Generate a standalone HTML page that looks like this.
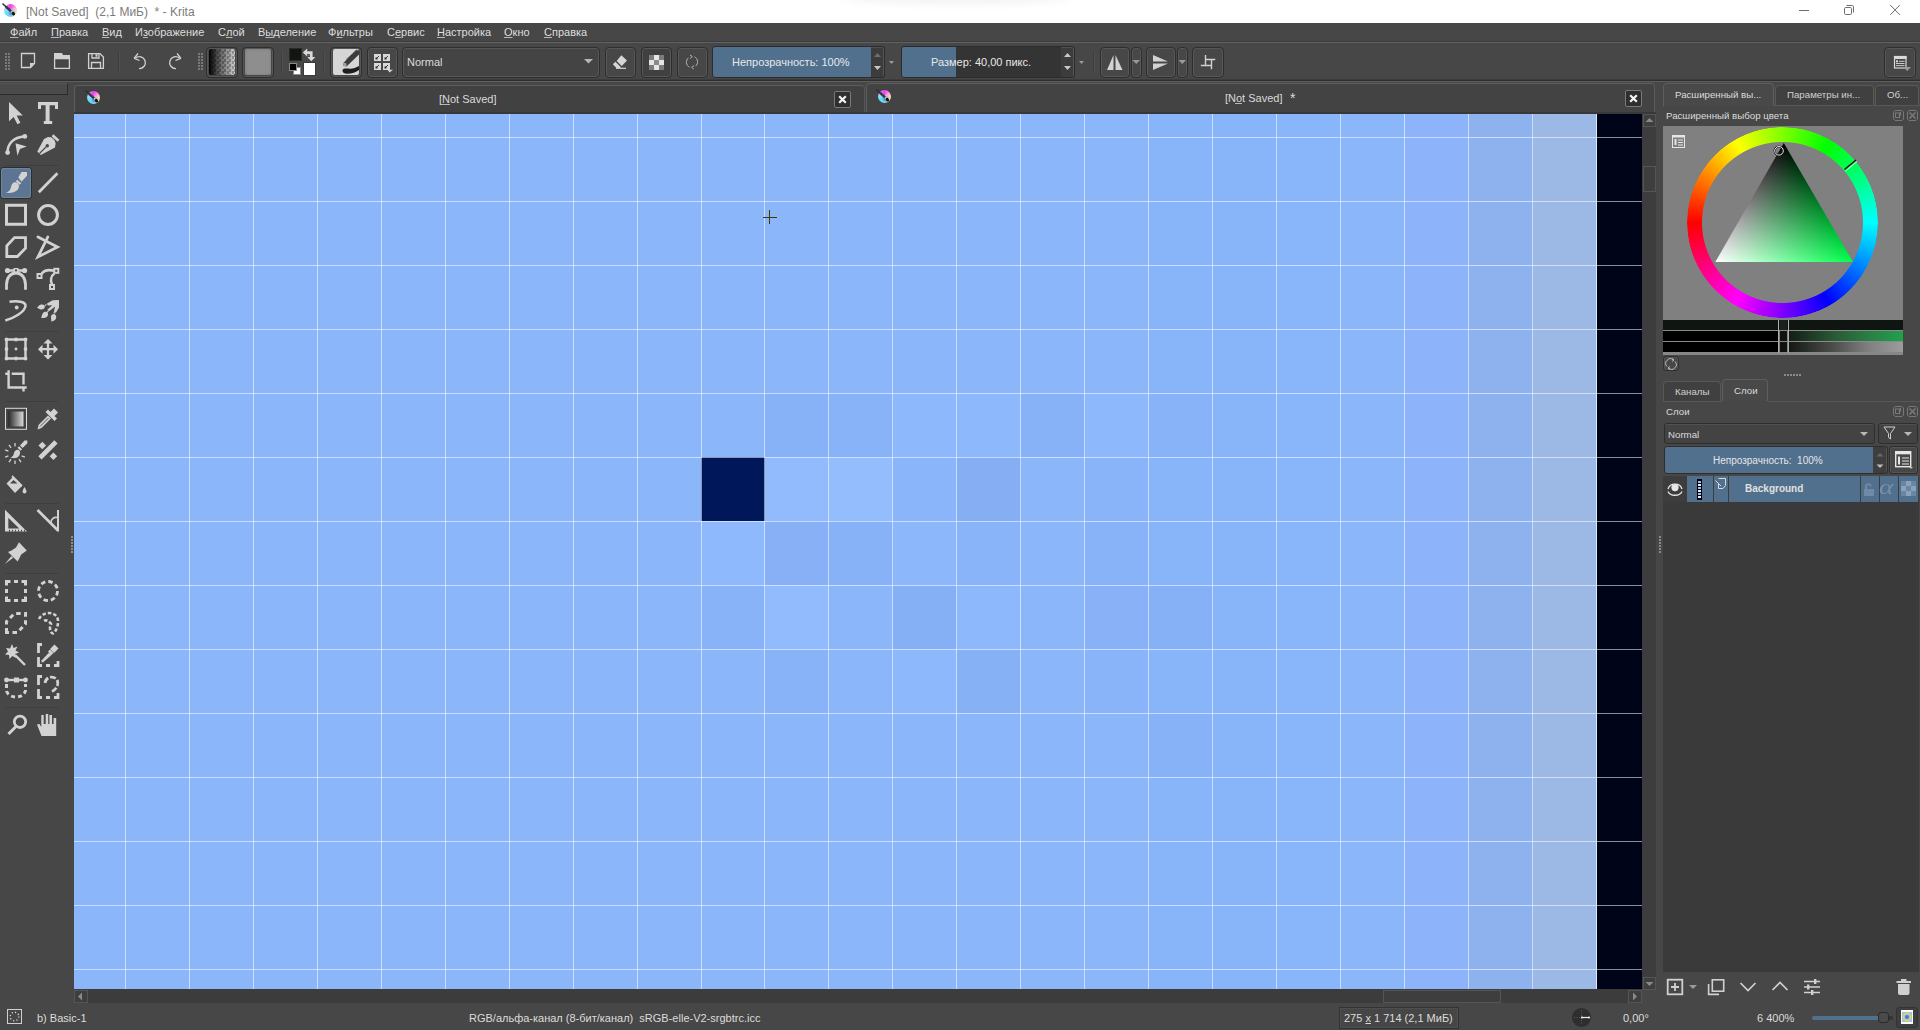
<!DOCTYPE html>
<html><head><meta charset="utf-8">
<style>
*{box-sizing:border-box;margin:0;padding:0}
html,body{width:1920px;height:1030px;overflow:hidden;background:#474747;font-family:"Liberation Sans",sans-serif;color:#dcdcdc;font-size:11px}
.a{position:absolute}
.t{position:absolute;white-space:pre}
.b{position:absolute;border:1px solid #2e2e2e;border-radius:4px;background:#474747;box-shadow:inset 0 0 0 1px #575757}
svg{position:absolute;overflow:visible}
.u{text-decoration:underline;text-underline-offset:1px;text-decoration-thickness:1px;text-decoration-color:#b8b8b8}
</style></head><body>

<div class="a" style="left:0px;top:0px;width:1920px;height:23px;background:#ffffff;"></div>
<div class="a" style="left:842px;top:-14px;width:232px;height:18px;border-radius:50%;background:rgba(0,0,0,0.05);filter:blur(4px)"></div>
<div class="a" style="left:4px;top:4px;width:13px;height:13px;border-radius:50%;background:radial-gradient(circle at 55% 70%,#4a8fe0 0,#5aa0ea 1.5px,rgba(140,200,240,0.9) 3px,rgba(140,200,240,0) 5px),conic-gradient(from 0deg,#f43cf6 0deg,#ff90e0 50deg,#ffc8d0 80deg,#fff066 120deg,#b8f0a0 160deg,#5ae8e8 200deg,#30f6f6 230deg,#a0d8ff 280deg,#d080f0 320deg,#f43cf6 360deg)"></div>
<svg style="left:4px;top:4px;" width="13" height="13" viewBox="0 0 13 13"><path d="M-1 0 L6.5 7" stroke="#2e2e2e" stroke-width="1.6" stroke-linecap="round"/><path d="M2.5 3.2 L6.8 7.2" stroke="#383838" stroke-width="2.4" stroke-linecap="round"/><path d="M7 7.3 L8.6 8.8" stroke="#bbb" stroke-width="2"/><ellipse cx="9.4" cy="9.6" rx="1.5" ry="1.9" transform="rotate(-40 9.4 9.6)" fill="#111"/></svg>
<div class="t" style="left:26px;top:6px;font-size:12px;line-height:12px;color:#7b7b7b;font-weight:400;">[Not Saved]  (2,1 МиБ)  * - Krita</div>
<div class="a" style="left:1799px;top:10px;width:10px;height:1px;background:#6e6e6e;"></div>
<svg style="left:0px;top:0px;" width="1920" height="1030" viewBox="0 0 1920 1030"><rect x="1844.5" y="7.5" width="7" height="7" rx="1.2" fill="none" stroke="#6e6e6e" stroke-width="1"/><path d="M1846.5 5.5 H1852 C1853 5.5 1853.5 6 1853.5 7 V12.5" fill="none" stroke="#6e6e6e" stroke-width="1"/><path d="M1890.3 5 L1899.8 14.8 M1899.8 5 L1890.3 14.8" stroke="#6e6e6e" stroke-width="1"/></svg>
<div class="a" style="left:0px;top:23px;width:1920px;height:18px;background:#474747;"></div>
<div class="t" style="left:10px;top:27px;font-size:11px;line-height:11px;color:#dedede;font-weight:400;"><span class="u">Ф</span>айл</div>
<div class="t" style="left:51px;top:27px;font-size:11px;line-height:11px;color:#dedede;font-weight:400;"><span class="u">П</span>равка</div>
<div class="t" style="left:102px;top:27px;font-size:11px;line-height:11px;color:#dedede;font-weight:400;"><span class="u">В</span>ид</div>
<div class="t" style="left:135px;top:27px;font-size:11px;line-height:11px;color:#dedede;font-weight:400;">И<span class="u">з</span>ображение</div>
<div class="t" style="left:218px;top:27px;font-size:11px;line-height:11px;color:#dedede;font-weight:400;">С<span class="u">л</span>ой</div>
<div class="t" style="left:258px;top:27px;font-size:11px;line-height:11px;color:#dedede;font-weight:400;">В<span class="u">ы</span>деление</div>
<div class="t" style="left:328px;top:27px;font-size:11px;line-height:11px;color:#dedede;font-weight:400;">Ф<span class="u">и</span>льтры</div>
<div class="t" style="left:387px;top:27px;font-size:11px;line-height:11px;color:#dedede;font-weight:400;">С<span class="u">е</span>рвис</div>
<div class="t" style="left:437px;top:27px;font-size:11px;line-height:11px;color:#dedede;font-weight:400;"><span class="u">Н</span>астройка</div>
<div class="t" style="left:504px;top:27px;font-size:11px;line-height:11px;color:#dedede;font-weight:400;"><span class="u">О</span>кно</div>
<div class="t" style="left:544px;top:27px;font-size:11px;line-height:11px;color:#dedede;font-weight:400;"><span class="u">С</span>правка</div>
<div class="a" style="left:0px;top:41px;width:1920px;height:1px;background:#3c3c3c;"></div>
<div class="a" style="left:0px;top:42px;width:1920px;height:1px;background:#626262;"></div>
<div class="a" style="left:0px;top:79px;width:1920px;height:1px;background:#3c3c3c;"></div>
<div class="a" style="left:0px;top:80px;width:1920px;height:1px;background:#2e2e2e;"></div>
<div class="a" style="left:0px;top:81px;width:1920px;height:1px;background:#5e5e5e;"></div>
<svg style="left:5px;top:53px;" width="8" height="20" viewBox="0 0 8 20"><rect x="0" y="0" width="2" height="2" fill="#7a7a7a"/><rect x="3" y="0" width="2" height="2" fill="#7a7a7a"/><rect x="0" y="3" width="2" height="2" fill="#7a7a7a"/><rect x="3" y="3" width="2" height="2" fill="#7a7a7a"/><rect x="0" y="6" width="2" height="2" fill="#7a7a7a"/><rect x="3" y="6" width="2" height="2" fill="#7a7a7a"/><rect x="0" y="9" width="2" height="2" fill="#7a7a7a"/><rect x="3" y="9" width="2" height="2" fill="#7a7a7a"/><rect x="0" y="12" width="2" height="2" fill="#7a7a7a"/><rect x="3" y="12" width="2" height="2" fill="#7a7a7a"/><rect x="0" y="15" width="2" height="2" fill="#7a7a7a"/><rect x="3" y="15" width="2" height="2" fill="#7a7a7a"/></svg>
<svg style="left:20px;top:52px;" width="18" height="18" viewBox="0 0 18 18"><path d="M1.5 1.5 H14.5 V11.5 L10.5 15.5 H1.5 Z" fill="none" stroke="#d2d2d2" stroke-width="1.3"/><path d="M14.5 11 H10 V15.5 Z" fill="#d2d2d2"/></svg>
<svg style="left:53px;top:52px;" width="18" height="18" viewBox="0 0 18 18"><path d="M1 1 H9 L10 3 H17 V7 H1 Z" fill="#d2d2d2"/><rect x="1.6" y="6.6" width="14.8" height="9.8" fill="none" stroke="#d2d2d2" stroke-width="1.3"/></svg>
<svg style="left:87px;top:52px;" width="18" height="18" viewBox="0 0 18 18"><path d="M1.6 1.6 H13 L16.4 5 V16.4 H1.6 Z" fill="none" stroke="#d2d2d2" stroke-width="1.3"/><path d="M5 1.6 V6 H12 V1.6" fill="none" stroke="#d2d2d2" stroke-width="1.3"/><rect x="8.5" y="2.2" width="2" height="2.5" fill="#d2d2d2"/><path d="M4.5 16.4 V10.5 H13.5 V16.4" fill="none" stroke="#d2d2d2" stroke-width="1.3"/></svg>
<div class="a" style="left:118px;top:52px;width:1px;height:21px;background:#3d3d3d;"></div>
<div class="a" style="left:119px;top:52px;width:1px;height:21px;background:#505050;"></div>
<svg style="left:132px;top:52px;" width="18" height="18" viewBox="0 0 18 18"><path d="M3.5 6 A6 6 0 1 1 7 16.6" fill="none" stroke="#d2d2d2" stroke-width="1.3"/><path d="M2 6.5 L6 1.5 M2.3 6.3 L7.5 8.5" stroke="#d2d2d2" stroke-width="1.3" fill="none"/></svg>
<svg style="left:165px;top:52px;" width="18" height="18" viewBox="0 0 18 18"><g transform="translate(18,0) scale(-1,1)"><path d="M3.5 6 A6 6 0 1 1 7 16.6" fill="none" stroke="#d2d2d2" stroke-width="1.3"/><path d="M2 6.5 L6 1.5 M2.3 6.3 L7.5 8.5" stroke="#d2d2d2" stroke-width="1.3" fill="none"/></g></svg>
<svg style="left:198px;top:53px;" width="8" height="20" viewBox="0 0 8 20"><rect x="0" y="0" width="2" height="2" fill="#7a7a7a"/><rect x="3" y="0" width="2" height="2" fill="#7a7a7a"/><rect x="0" y="3" width="2" height="2" fill="#7a7a7a"/><rect x="3" y="3" width="2" height="2" fill="#7a7a7a"/><rect x="0" y="6" width="2" height="2" fill="#7a7a7a"/><rect x="3" y="6" width="2" height="2" fill="#7a7a7a"/><rect x="0" y="9" width="2" height="2" fill="#7a7a7a"/><rect x="3" y="9" width="2" height="2" fill="#7a7a7a"/><rect x="0" y="12" width="2" height="2" fill="#7a7a7a"/><rect x="3" y="12" width="2" height="2" fill="#7a7a7a"/><rect x="0" y="15" width="2" height="2" fill="#7a7a7a"/><rect x="3" y="15" width="2" height="2" fill="#7a7a7a"/></svg>
<div class="b" style="left:206px;top:47px;width:32px;height:31px;"></div>
<div class="a" style="left:209px;top:49px;width:26px;height:26px;border-radius:2px;background:linear-gradient(to right,#000 0%,rgba(0,0,0,0.6) 35%,rgba(0,0,0,0) 100%),repeating-conic-gradient(#d0d0d0 0 25%,#9a9a9a 0 50%) 0 0/5px 5px"></div>
<div class="b" style="left:242px;top:47px;width:32px;height:31px;"></div>
<div class="a" style="left:245px;top:49px;width:26px;height:26px;border-radius:2px;background:#8e8e8e;box-shadow:inset 0 0 3px #777"></div>
<div class="a" style="left:281px;top:52px;width:1px;height:21px;background:#3d3d3d;"></div>
<div class="a" style="left:282px;top:52px;width:1px;height:21px;background:#505050;"></div>
<div class="a" style="left:289px;top:48px;width:13px;height:13px;background:#111611;border:1px solid #2a2a2a"></div>
<div class="a" style="left:303px;top:62px;width:13px;height:14px;background:#ffffff;border:1px solid #3a3a3a"></div>
<div class="a" style="left:293px;top:67px;width:8px;height:8px;background:#fff;border:1px solid #8a8a8a"></div>
<div class="a" style="left:289px;top:63px;width:8px;height:8px;background:#000;border:1px solid #8a8a8a"></div>
<svg style="left:0px;top:0px;" width="1920" height="1030" viewBox="0 0 1920 1030"><path d="M306 52.6 H311.3 V57.5" fill="none" stroke="#d8d8d8" stroke-width="2.6"/><path d="M302.8 52.6 L307.2 48.6 V56.6 Z" fill="#d8d8d8"/><path d="M307.3 57 H315.3 L311.3 61.2 Z" fill="#d8d8d8"/><rect x="308.3" y="54" width="1.6" height="2" fill="#6a6a6a"/></svg>
<div class="a" style="left:323px;top:52px;width:1px;height:21px;background:#3d3d3d;"></div>
<div class="a" style="left:324px;top:52px;width:1px;height:21px;background:#505050;"></div>
<div class="b" style="left:330px;top:47px;width:32px;height:31px;"></div>
<div class="a" style="left:333px;top:49px;width:26px;height:26px;border-radius:2px;background:#d6d6d6"></div>
<svg style="left:0px;top:0px;" width="1920" height="1030" viewBox="0 0 1920 1030"><path d="M359 50.5 L359 54.5 L346.5 66.5 L343.3 65.8 L343.8 62.5 L356 50 Z" fill="#3c3c3c"/><path d="M343.3 65.8 L343.8 62.5 L346.5 63.5 L346.5 66.5 Z" fill="#a0a0a0"/><path d="M346 59.5 L357 49.8" stroke="#5a5a5a" stroke-width="0.8"/><path d="M342.5 70.3 C343 67.8 347 68.5 350 68.8 C353 69 356 67.5 359 66 V70 C356 72 352 73.8 347 73.8 C344 73.8 342.3 72.5 342.5 70.3 Z" fill="#1e1e1e"/></svg>
<div class="b" style="left:367px;top:47px;width:31px;height:31px;"></div>
<svg style="left:0px;top:0px;" width="1920" height="1030" viewBox="0 0 1920 1030"><rect x="374" y="54" width="7" height="7" fill="#d8d8d8"/><path d="M376 59 L379 56" stroke="#2a2a2a" stroke-width="0.9"/><rect x="375.5" y="57.5" width="2" height="2" fill="#2a2a2a"/><rect x="383" y="54" width="7" height="7" fill="#d8d8d8"/><path d="M385 59 L388 56" stroke="#2a2a2a" stroke-width="0.9"/><rect x="384.5" y="57.5" width="2" height="2" fill="#2a2a2a"/><rect x="374" y="63" width="7" height="7" fill="#d8d8d8"/><path d="M376 68 L379 65" stroke="#2a2a2a" stroke-width="0.9"/><rect x="375.5" y="66.5" width="2" height="2" fill="#2a2a2a"/><rect x="383" y="63" width="7" height="7" fill="#d8d8d8"/><path d="M385 68 L388 65" stroke="#2a2a2a" stroke-width="0.9"/><rect x="384.5" y="66.5" width="2" height="2" fill="#2a2a2a"/><path d="M387.5 69.8 H393 L389.5 72.5 Z" fill="#d8d8d8"/></svg>
<div class="b" style="left:402px;top:47px;width:198px;height:31px;background:#444;"></div>
<div class="t" style="left:407px;top:57px;font-size:11px;line-height:11px;color:#dcdcdc;font-weight:400;">Normal</div>
<svg style="left:584px;top:59px;" width="10" height="6" viewBox="0 0 10 6"><path d="M0 0 H9 L4.5 4.5 Z" fill="#b8b8b8"/></svg>
<div class="b" style="left:605px;top:47px;width:31px;height:31px;"></div>
<svg style="left:0px;top:0px;" width="1920" height="1030" viewBox="0 0 1920 1030"><path d="M616.6 61 L621.3 55.3 L627 60.6 L621.8 66 Z" fill="#d6d6d6"/><path d="M612.8 64.3 L615.4 61.8 L620.8 67 L620 68 H616.5 Z" fill="#d6d6d6"/><path d="M616 68.3 H626" stroke="#d6d6d6" stroke-width="1.2"/></svg>
<div class="b" style="left:641px;top:47px;width:31px;height:31px;background:#404040;"></div>
<svg style="left:0px;top:0px;" width="1920" height="1030" viewBox="0 0 1920 1030"><rect x="649" y="55" width="5" height="5" fill="#7c7c7c"/><rect x="654" y="55" width="5" height="5" fill="#e6e6e6"/><rect x="659" y="55" width="5" height="5" fill="#7c7c7c"/><rect x="649" y="60" width="5" height="5" fill="#e6e6e6"/><rect x="654" y="60" width="5" height="5" fill="#8a8a8a"/><rect x="659" y="60" width="5" height="5" fill="#e6e6e6"/><rect x="649" y="65" width="5" height="5" fill="#7c7c7c"/><rect x="654" y="65" width="5" height="5" fill="#e6e6e6"/><rect x="659" y="65" width="5" height="5" fill="#7c7c7c"/></svg>
<div class="b" style="left:677px;top:47px;width:31px;height:31px;"></div>
<svg style="left:0px;top:0px;" width="1920" height="1030" viewBox="0 0 1920 1030"><path d="M688.5 57.8 A5.6 5.6 0 0 0 689.5 67.2" fill="none" stroke="#b4b4b4" stroke-width="1"/><path d="M695.5 66.2 A5.6 5.6 0 0 0 694.5 56.8" fill="none" stroke="#b4b4b4" stroke-width="1"/><path d="M690 55 L692.3 56.6 L690.2 58.5 M694 65.5 L691.7 67.4 L693.8 69" fill="none" stroke="#b4b4b4" stroke-width="1"/></svg>
<div class="a" style="left:712px;top:46px;width:160px;height:32px;border:1px solid #2c2c2c;border-radius:3px 0 0 3px;background:#50708e"></div>
<div class="t" style="left:732px;top:57px;font-size:11px;line-height:11px;color:#e8e8e8;font-weight:400;">Непрозрачность: 100%</div>
<div class="a" style="left:871px;top:46px;width:14px;height:32px;border:1px solid #2c2c2c;border-left:none;border-radius:0 3px 3px 0;background:#3c3c3c;box-shadow:inset -1px 0 0 #555,inset 0 1px 0 #505050"></div>
<svg style="left:874px;top:53px;" width="8" height="5" viewBox="0 0 8 5"><path d="M0 4 H7 L3.5 0 Z" fill="#6e6e6e"/></svg>
<svg style="left:874px;top:66px;" width="8" height="5" viewBox="0 0 8 5"><path d="M0 0 H7 L3.5 4 Z" fill="#c8c8c8"/></svg>
<svg style="left:889px;top:61px;" width="6" height="4" viewBox="0 0 6 4"><path d="M0 0 H5 L2.5 3 Z" fill="#9a9a9a"/></svg>
<div class="a" style="left:901px;top:46px;width:161px;height:32px;border:1px solid #2c2c2c;border-radius:3px 0 0 3px;background:linear-gradient(to right,#50708e 0 54px,#343434 54px)"></div>
<div class="t" style="left:931px;top:57px;font-size:11px;line-height:11px;color:#e8e8e8;font-weight:400;">Размер: 40,00 пикс.</div>
<div class="a" style="left:1061px;top:46px;width:14px;height:32px;border:1px solid #2c2c2c;border-left:none;border-radius:0 3px 3px 0;background:#3c3c3c;box-shadow:inset -1px 0 0 #555,inset 0 1px 0 #505050"></div>
<svg style="left:1064px;top:53px;" width="8" height="5" viewBox="0 0 8 5"><path d="M0 4 H7 L3.5 0 Z" fill="#c8c8c8"/></svg>
<svg style="left:1064px;top:66px;" width="8" height="5" viewBox="0 0 8 5"><path d="M0 0 H7 L3.5 4 Z" fill="#c8c8c8"/></svg>
<svg style="left:1079px;top:61px;" width="6" height="4" viewBox="0 0 6 4"><path d="M0 0 H5 L2.5 3 Z" fill="#9a9a9a"/></svg>
<div class="a" style="left:1093px;top:52px;width:1px;height:21px;background:#3d3d3d;"></div>
<div class="a" style="left:1094px;top:52px;width:1px;height:21px;background:#505050;"></div>
<div class="b" style="left:1100px;top:47px;width:30px;height:31px;"></div>
<svg style="left:1106px;top:54px;" width="18" height="18" viewBox="0 0 18 18"><path d="M7.5 1 V16 H1 Z" fill="#d2d2d2"/><path d="M9.5 1 V16 H16.5 Z" fill="#d2d2d2"/></svg>
<div class="b" style="left:1131px;top:47px;width:11px;height:31px;"></div>
<svg style="left:1132px;top:60px;" width="9" height="5" viewBox="0 0 9 5"><path d="M0.5 0 H8 L4.25 4 Z" fill="#9a9a9a"/></svg>
<div class="b" style="left:1146px;top:47px;width:30px;height:31px;"></div>
<svg style="left:1152px;top:54px;" width="18" height="18" viewBox="0 0 18 18"><path d="M1 1 L16 7.5 H1 Z" fill="#d2d2d2"/><path d="M1 9.5 H16 L1 16 Z" fill="#d2d2d2"/></svg>
<div class="b" style="left:1177px;top:47px;width:11px;height:31px;"></div>
<svg style="left:1178px;top:60px;" width="9" height="5" viewBox="0 0 9 5"><path d="M0.5 0 H8 L4.25 4 Z" fill="#9a9a9a"/></svg>
<div class="b" style="left:1192px;top:47px;width:32px;height:31px;"></div>
<svg style="left:0px;top:0px;" width="1920" height="1030" viewBox="0 0 1920 1030"><path d="M1205.5 55 V65.5 M1200.8 65.5 H1211.5 M1205.5 59.5 H1215.3 M1211.5 59.5 V69.3" fill="none" stroke="#d2d2d2" stroke-width="1.4"/></svg>
<div class="b" style="left:1884px;top:47px;width:32px;height:31px;"></div>
<svg style="left:0px;top:0px;" width="1920" height="1030" viewBox="0 0 1920 1030"><rect x="1894.5" y="56.5" width="11.5" height="11.5" fill="none" stroke="#d8d8d8" stroke-width="1.2"/><rect x="1894" y="56" width="12.5" height="3" fill="#d8d8d8"/><rect x="1896" y="60.3" width="2" height="2" fill="#d8d8d8"/><path d="M1899 61.3 H1904.5 M1896 63.5 H1904.5 M1896 65.6 H1904.5" stroke="#d8d8d8" stroke-width="0.9"/><path d="M1903.5 67 H1911 L1907.2 71 Z" fill="#9a9a9a"/></svg>
<div class="a" style="left:0px;top:83px;width:68px;height:12px;background:#4b4b4b;border-bottom:1px solid #2c2c2c;border-right:1px solid #2c2c2c;border-top:1px solid #555"></div>
<div class="a" style="left:6px;top:165px;width:52px;height:1px;background:#3e3e3e;"></div>
<div class="a" style="left:6px;top:331px;width:52px;height:1px;background:#3e3e3e;"></div>
<div class="a" style="left:6px;top:401px;width:52px;height:1px;background:#3e3e3e;"></div>
<div class="a" style="left:6px;top:503px;width:52px;height:1px;background:#3e3e3e;"></div>
<div class="a" style="left:6px;top:573px;width:52px;height:1px;background:#3e3e3e;"></div>
<div class="a" style="left:6px;top:707px;width:52px;height:1px;background:#3e3e3e;"></div>
<div class="a" style="left:1px;top:168px;width:30px;height:30px;border-radius:3px;background:#5b7592;box-shadow:0 0 0 1px #2e2e2e,inset 0 0 0 1px #6d86a0"></div>
<svg style="left:0px;top:0px;" width="80" height="1030" viewBox="0 0 80 1030"><rect x="71" y="536" width="2" height="2" fill="#8a8a8a"/><rect x="71" y="539" width="2" height="2" fill="#8a8a8a"/><rect x="71" y="542" width="2" height="2" fill="#8a8a8a"/><rect x="71" y="545" width="2" height="2" fill="#8a8a8a"/><rect x="71" y="548" width="2" height="2" fill="#8a8a8a"/><rect x="71" y="551" width="2" height="2" fill="#8a8a8a"/><path d="M9 102 L9 121.2 L13.7 117 L17.4 124.2 L20.4 122.8 L16.7 115.6 L22.8 115.6 Z" fill="#d2d2d2"/><path d="M38 102 H58 V109 H55 V105.3 H49.6 V121 H52.2 V124 H43.8 V121 H45.6 V105.3 H41 V109 H38 Z" fill="#d2d2d2"/><path d="M7.5 152.6 C7.5 144 13 137.5 24.8 136.4" fill="none" stroke="#d2d2d2" stroke-width="2.6" stroke-linecap="butt" stroke-linejoin="miter"/><circle cx="7.6" cy="152.6" r="2.4" fill="#d2d2d2"/><circle cx="24.8" cy="136.4" r="2.4" fill="#d2d2d2"/><path d="M15.5 143.2 L26.7 146.6 L20 149 L17.4 155.7 Z" fill="#d2d2d2"/><path d="M37.3 151.6 L44 139 L48 137 L53.8 137.5 L55.6 143.5 L55 147.5 L40.8 155 Z" fill="#d2d2d2"/><path d="M39.5 153.5 L46.5 146.4" stroke="#474747" stroke-width="1.3"/><circle cx="47.3" cy="145.7" r="1.7" fill="#474747"/><path d="M52.5 135.2 L58.5 140.8" fill="none" stroke="#d2d2d2" stroke-width="2.6" stroke-linecap="butt" stroke-linejoin="miter"/><path d="M51 136.5 L57 142" stroke="#474747" stroke-width="1"/><path d="M18.3 177.4 L21.5 172.1 H27 V175.8 L21.5 181.7 Z" fill="#d2d2d2"/><path d="M16.5 180.5 L20.5 184" fill="none" stroke="#d2d2d2" stroke-width="2.2" stroke-linecap="butt" stroke-linejoin="miter"/><path d="M5.3 192.6 C9 192 10.5 190 11 187 C11.5 183.5 14 181.5 16.5 182.5 C19.5 183.5 19.8 187.5 17.5 190 C14.5 193 9 193.5 5.3 192.6 Z" fill="#d2d2d2"/><path d="M38.8 192.2 L57.4 173.2" fill="none" stroke="#d2d2d2" stroke-width="2.8" stroke-linecap="butt" stroke-linejoin="miter"/><path d="M6.5 205.3 H25.5 V224.3 H6.5 Z" fill="none" stroke="#d2d2d2" stroke-width="3" stroke-linecap="butt" stroke-linejoin="miter"/><circle cx="48" cy="215" r="9.4" fill="none" stroke="#d2d2d2" stroke-width="3"/><path d="M14.5 237.6 H25.5 V248.2 L17.4 256.5 H6.8 V245.7 Z" fill="none" stroke="#d2d2d2" stroke-width="2.8" stroke-linecap="butt" stroke-linejoin="miter"/><path d="M38 237 L57.5 246.9 L38 256.9 L47.8 237" fill="none" stroke="#d2d2d2" stroke-width="2.8" stroke-linecap="round" stroke-linejoin="miter"/><path d="M7.5 270.5 H24.6" fill="none" stroke="#d2d2d2" stroke-width="2.5" stroke-linecap="butt" stroke-linejoin="miter"/><circle cx="7.5" cy="270.5" r="2.6" fill="#d2d2d2"/><circle cx="24.6" cy="270.5" r="2.6" fill="#d2d2d2"/><rect x="13.5" y="268" width="5" height="5" fill="#d2d2d2"/><rect x="15" y="269.5" width="2" height="2" fill="#474747"/><path d="M6.5 289.8 V285 C6.5 277 11 273 16 273 C21 273 25.5 277 25.5 285 V289.8" fill="none" stroke="#d2d2d2" stroke-width="2.8" stroke-linecap="butt" stroke-linejoin="miter"/><path d="M41.5 274 C44 270.5 49 269.5 54 270.8 M54.5 273.5 C50.5 276 50.5 281 52 284.5" fill="none" stroke="#d2d2d2" stroke-width="2.6" stroke-linecap="butt" stroke-linejoin="miter"/><rect x="36.5" y="273" width="6" height="6" fill="#d2d2d2"/><rect x="38.5" y="275" width="2" height="2" fill="#474747"/><rect x="53.3" y="267.8" width="6" height="6" fill="#d2d2d2"/><rect x="55.3" y="269.8" width="2" height="2" fill="#474747"/><rect x="49" y="284" width="6" height="6" fill="#d2d2d2"/><rect x="51" y="286" width="2" height="2" fill="#474747"/><path d="M5.3 320.5 C13 318.5 25 312 25.5 306 C26 301.5 17 300.5 9.5 301.8" fill="none" stroke="#d2d2d2" stroke-width="2.6" stroke-linecap="butt" stroke-linejoin="miter"/><circle cx="16.7" cy="307.5" r="1.9" fill="#d2d2d2"/><path d="M52.6 300.2 L59 300 L59 307.5 L56.2 312.3 L53.8 311.8 L55.2 306.6 L49 311.3 L47.3 309.8 L52.3 305.2 L47.8 305.4 L47 303.6 Z" fill="#d2d2d2"/><path d="M46.4 304.3 L45.2 305.6 M48.4 310.8 L47 312.3 M55.6 312.8 L53.6 312.6" stroke="#d2d2d2" stroke-width="1.2"/><path d="M37 307.6 C38.5 306.8 39 305 41 304.6 C43 304.2 45 305 44.9 306.8 C44.8 308.8 42.5 309.8 40.5 309.4 C39 309.1 38 308.2 37 307.6 Z" fill="#d2d2d2"/><path d="M41 317.7 C42 316.5 41.8 314.5 43 313 C44.2 311.5 46.5 311.3 47.6 312.6 C48.6 314 48 316.3 46.5 317.3 C45 318.2 42.8 318.2 41 317.7 Z" fill="#d2d2d2"/><path d="M51.2 321.6 C51.6 320.2 50.8 318.5 51 316.8 C51.2 315 52.8 313.8 54.5 314.2 C56.2 314.7 56.6 316.8 56 318.5 C55.3 320.3 53.3 321.3 51.2 321.6 Z" fill="#d2d2d2"/><path d="M6.5 339.5 H25.5 V358.5 H6.5 Z" fill="none" stroke="#d2d2d2" stroke-width="2.4" stroke-linecap="butt" stroke-linejoin="miter"/><circle cx="6.5" cy="339.5" r="1.9" fill="#d2d2d2"/><circle cx="16" cy="339.5" r="1.9" fill="#d2d2d2"/><circle cx="25.5" cy="339.5" r="1.9" fill="#d2d2d2"/><circle cx="6.5" cy="349" r="1.9" fill="#d2d2d2"/><circle cx="25.5" cy="349" r="1.9" fill="#d2d2d2"/><circle cx="6.5" cy="358.5" r="1.9" fill="#d2d2d2"/><circle cx="16" cy="358.5" r="1.9" fill="#d2d2d2"/><circle cx="25.5" cy="358.5" r="1.9" fill="#d2d2d2"/><circle cx="16" cy="349" r="1.4" fill="#d2d2d2"/><path d="M39 349.2 H57 M48 340 V358.5" fill="none" stroke="#d2d2d2" stroke-width="2.2" stroke-linecap="butt" stroke-linejoin="miter"/><path d="M38 349.2 L42.5 344.7 V353.7 Z" fill="#d2d2d2"/><path d="M58 349.2 L53.5 344.7 V353.7 Z" fill="#d2d2d2"/><path d="M48 339 L43.5 343.5 H52.5 Z" fill="#d2d2d2"/><path d="M48 359.5 L43.5 355 H52.5 Z" fill="#d2d2d2"/><path d="M5.3 373.7 H8.6 M8.6 370.3 V387.5 H26.7 M11.7 373.7 H23.5 V384.5 M23.5 387.5 V391.5" fill="none" stroke="#d2d2d2" stroke-width="2.4" stroke-linecap="butt" stroke-linejoin="miter"/><rect x="5.5" y="408.3" width="21" height="21" fill="none" stroke="#dadada" stroke-width="1"/><defs><linearGradient id="gg" x1="0" y1="0" x2="1" y2="0"><stop offset="0" stop-color="#262626"/><stop offset="1" stop-color="#e0e0e0"/></linearGradient></defs><rect x="8" y="411" width="16" height="16" fill="url(#gg)" stroke="#3a3a3a" stroke-width="1"/><path d="M37.6 429.6 L38.5 425 L48 415.5 L51 418.5 L41.5 428 Z" fill="#d2d2d2"/><path d="M40 426.5 L48.5 418" stroke="#474747" stroke-width="0.9"/><path d="M45.5 412 L48 409.5 L50.5 412 L54 408.5 L58 412.5 L54.5 416 L57 418.5 L54.5 421 Z" fill="#d2d2d2"/><path d="M20 445.5 L24.5 440.5 H27.3 V443.5 L22.5 448 Z" fill="#d2d2d2"/><path d="M18.3 447 L21.3 450" fill="none" stroke="#d2d2d2" stroke-width="2.2" stroke-linecap="butt" stroke-linejoin="miter"/><path d="M10.5 457.5 C13 457 13.5 455 14 453 C14.5 450.5 17 449 19 450.3 C21 452 20 455.5 18 457 C16 458.5 13 458.5 10.5 457.5 Z" fill="#d2d2d2"/><path d="M8.4 451.1 L5.1 449.9" fill="none" stroke="#d2d2d2" stroke-width="1.3" stroke-linecap="butt" stroke-linejoin="miter"/><path d="M11.0 447.8 L9.0 444.9" fill="none" stroke="#d2d2d2" stroke-width="1.3" stroke-linecap="butt" stroke-linejoin="miter"/><path d="M15.0 446.5 L15.0 443.0" fill="none" stroke="#d2d2d2" stroke-width="1.3" stroke-linecap="butt" stroke-linejoin="miter"/><path d="M21.6 455.9 L24.9 457.1" fill="none" stroke="#d2d2d2" stroke-width="1.3" stroke-linecap="butt" stroke-linejoin="miter"/><path d="M19.0 459.2 L21.0 462.1" fill="none" stroke="#d2d2d2" stroke-width="1.3" stroke-linecap="butt" stroke-linejoin="miter"/><path d="M15.0 460.5 L15.0 464.0" fill="none" stroke="#d2d2d2" stroke-width="1.3" stroke-linecap="butt" stroke-linejoin="miter"/><path d="M11.0 459.2 L9.0 462.1" fill="none" stroke="#d2d2d2" stroke-width="1.3" stroke-linecap="butt" stroke-linejoin="miter"/><path d="M8.4 455.9 L5.1 457.1" fill="none" stroke="#d2d2d2" stroke-width="1.3" stroke-linecap="butt" stroke-linejoin="miter"/><path d="M38.3 456.3 L54.3 440.3 L57.6 443.6 L41.6 459.6 Z" fill="#d2d2d2"/><path d="M42.3 441.7 L46.1 445.5 L42.3 449.3 L38.5 445.5 Z" fill="#d2d2d2"/><path d="M53.4 452.4 L57.2 456.2 L53.4 460 L49.6 456.2 Z" fill="#d2d2d2"/><path d="M6.5 483.5 L13 477 L22 486 L15 493 Z" fill="#d2d2d2"/><path d="M10 483.5 L13.5 480 L17.5 483.5 Z" fill="#474747"/><path d="M12 476 L22 486" fill="none" stroke="#d2d2d2" stroke-width="1.8" stroke-linecap="butt" stroke-linejoin="miter"/><path d="M24.5 487 C25.5 489 26.5 490 26.5 491.5 C26.5 492.8 25.5 493.5 24.5 493.5 C23.5 493.5 22.6 492.8 22.6 491.5 C22.6 490 23.5 489 24.5 487 Z" fill="#d2d2d2"/><path d="M5 509.7 L27 531.6 H5 Z" fill="#d2d2d2"/><path d="M8.3 517.8 L19.2 528.6 H8.3 Z" fill="#474747"/><rect x="9" y="529.8" width="1" height="1.8" fill="#474747"/><rect x="12" y="529.8" width="1" height="1.8" fill="#474747"/><rect x="15" y="529.8" width="1" height="1.8" fill="#474747"/><rect x="18" y="529.8" width="1" height="1.8" fill="#474747"/><rect x="21" y="529.8" width="1" height="1.8" fill="#474747"/><rect x="24" y="529.8" width="1" height="1.8" fill="#474747"/><path d="M37.5 510 L58 530.5" fill="none" stroke="#d2d2d2" stroke-width="2.6" stroke-linecap="butt" stroke-linejoin="miter"/><path d="M58 510 V531.5" fill="none" stroke="#d2d2d2" stroke-width="2" stroke-linecap="butt" stroke-linejoin="miter"/><path d="M51 522.8 A5 5 0 0 1 57 517.5" fill="none" stroke="#d2d2d2" stroke-width="1.6" stroke-linecap="butt" stroke-linejoin="miter"/><path d="M19 542.2 L26.8 550.5 L21.2 554.6 L19.2 558.6 L17.6 561.6 L8 552 L11.5 550.6 L16 547.6 Z" fill="#d2d2d2"/><path d="M4.8 564 L11.5 556 L13.2 557.8 Z" fill="#d2d2d2"/><path d="M6.5 581.5 H25.5 V600.5 H6.5 Z" fill="none" stroke="#d2d2d2" stroke-width="3" stroke-dasharray="8 3.5 4 3.5" stroke-dashoffset="4"/><circle cx="48" cy="591" r="9.5" fill="none" stroke="#d2d2d2" stroke-width="2.8" stroke-dasharray="4.46 3"/><path d="M6.5 632.5 V621.5 L14.5 613.5 H25.5 V624 L17.5 632.5 Z" fill="none" stroke="#d2d2d2" stroke-width="3" stroke-linecap="butt" stroke-linejoin="miter" stroke-dasharray="4.5 3.5"/><path d="M39 619 C42 612 53 611 57 617 C60 623 56 632 53 633.5 C50 633 49 627 51 624 C49 621 46 619.5 43.5 621" fill="none" stroke="#d2d2d2" stroke-width="2.6" stroke-linecap="butt" stroke-linejoin="miter" stroke-dasharray="3.5 2"/><path d="M12 644 L13.5 648 L17.5 646.5 L15.5 650.5 L19 652.5 L15 654 L16 658 L12.3 656 L9.5 659 L9 655 L5 654.5 L8 651.5 L6 648 L10 648.5 Z" fill="#d2d2d2"/><path d="M15 655 L25 665" fill="none" stroke="#d2d2d2" stroke-width="2.4" stroke-linecap="butt" stroke-linejoin="miter"/><path d="M38.5 653 V644.5 H42 M38.5 657 V665.5 H42 M46 665.5 H50 M54 665.5 H58 V661" fill="none" stroke="#d2d2d2" stroke-width="2.8" stroke-linecap="butt" stroke-linejoin="miter"/><path d="M41.5 660.5 L49 652.5 L51.5 655 L43.5 662 L41.5 662.5 Z" fill="#d2d2d2"/><path d="M50 649 L54.5 644.5 L58.5 648.5 L54 653 Z" fill="#d2d2d2"/><path d="M48 651.5 L50 649.5 L53.5 653 L51.5 655 Z" fill="#d2d2d2"/><path d="M6.5 680 H25.5" fill="none" stroke="#d2d2d2" stroke-width="2.4" stroke-linecap="butt" stroke-linejoin="miter"/><circle cx="6.5" cy="680" r="2.4" fill="#d2d2d2"/><circle cx="25.5" cy="680" r="2.4" fill="#d2d2d2"/><rect x="14" y="677.5" width="5" height="5" fill="#d2d2d2"/><path d="M6.5 684 V690 C6.5 694 11 697 16 697 C21 697 25.5 694 25.5 690 V684" fill="none" stroke="#d2d2d2" stroke-width="3" stroke-linecap="butt" stroke-linejoin="miter" stroke-dasharray="4 3"/><path d="M38.5 685 V676.5 H42 M38.5 689 V697.5 H42 M46 697.5 H50 M54 697.5 H58 V693" fill="none" stroke="#d2d2d2" stroke-width="2.8" stroke-linecap="butt" stroke-linejoin="miter"/><path d="M45 683 C46 676 55 675 57.5 681 C59 686 55 690 52 691.5" fill="none" stroke="#d2d2d2" stroke-width="2.8" stroke-linecap="butt" stroke-linejoin="miter" stroke-dasharray="6 2"/><circle cx="20" cy="721.8" r="5.7" fill="none" stroke="#d2d2d2" stroke-width="2.8"/><path d="M16 726.5 L8.5 734" fill="none" stroke="#d2d2d2" stroke-width="3" stroke-linecap="butt" stroke-linejoin="miter"/><path d="M41.3 715 H43.7 V724 H45.7 V714 H48.2 V724 H49.4 V715 H52 V724 H53.6 V718 H56.2 V736 H41.5 L37 724.5 L39.5 724 L41.3 727 Z" fill="#d2d2d2"/></svg>
<div class="a" style="left:74px;top:82px;width:1582px;height:32px;background:#474747;"></div>
<div class="a" style="left:74px;top:85px;width:791px;height:28px;background:#414141;border-top:1px solid #5c5c5c;border-left:1px solid #5c5c5c;border-right:1px solid #555;border-radius:4px 4px 0 0"></div>
<div class="a" style="left:866px;top:83px;width:789px;height:30px;background:#434343;border-top:1px solid #606060;border-left:1px solid #5c5c5c;border-right:1px solid #5c5c5c;border-radius:4px 4px 0 0"></div>
<div class="a" style="left:74px;top:112px;width:1582px;height:2px;background:#383838;"></div>
<div class="a" style="left:87px;top:91px;width:13px;height:13px;border-radius:50%;background:radial-gradient(circle at 55% 70%,#4a8fe0 0,#5aa0ea 1.5px,rgba(140,200,240,0.9) 3px,rgba(140,200,240,0) 5px),conic-gradient(from 0deg,#f43cf6 0deg,#ff90e0 50deg,#ffc8d0 80deg,#fff066 120deg,#b8f0a0 160deg,#5ae8e8 200deg,#30f6f6 230deg,#a0d8ff 280deg,#d080f0 320deg,#f43cf6 360deg)"></div>
<svg style="left:87px;top:91px;" width="13" height="13" viewBox="0 0 13 13"><path d="M-1 0 L6.5 7" stroke="#2e2e2e" stroke-width="1.6" stroke-linecap="round"/><path d="M2.5 3.2 L6.8 7.2" stroke="#383838" stroke-width="2.4" stroke-linecap="round"/><path d="M7 7.3 L8.6 8.8" stroke="#bbb" stroke-width="2"/><ellipse cx="9.4" cy="9.6" rx="1.5" ry="1.9" transform="rotate(-40 9.4 9.6)" fill="#111"/></svg>
<div class="a" style="left:878px;top:90px;width:13px;height:13px;border-radius:50%;background:radial-gradient(circle at 55% 70%,#4a8fe0 0,#5aa0ea 1.5px,rgba(140,200,240,0.9) 3px,rgba(140,200,240,0) 5px),conic-gradient(from 0deg,#f43cf6 0deg,#ff90e0 50deg,#ffc8d0 80deg,#fff066 120deg,#b8f0a0 160deg,#5ae8e8 200deg,#30f6f6 230deg,#a0d8ff 280deg,#d080f0 320deg,#f43cf6 360deg)"></div>
<svg style="left:878px;top:90px;" width="13" height="13" viewBox="0 0 13 13"><path d="M-1 0 L6.5 7" stroke="#2e2e2e" stroke-width="1.6" stroke-linecap="round"/><path d="M2.5 3.2 L6.8 7.2" stroke="#383838" stroke-width="2.4" stroke-linecap="round"/><path d="M7 7.3 L8.6 8.8" stroke="#bbb" stroke-width="2"/><ellipse cx="9.4" cy="9.6" rx="1.5" ry="1.9" transform="rotate(-40 9.4 9.6)" fill="#111"/></svg>
<div class="t" style="left:439px;top:94px;font-size:11px;line-height:11px;color:#dadada;font-weight:400;">[Not Saved]</div>
<div class="a" style="left:442px;top:104px;width:8px;height:1px;background:#b8b8b8;"></div>
<div class="t" style="left:1225px;top:93px;font-size:11px;line-height:11px;color:#dadada;font-weight:400;">[Not Saved]</div>
<div class="a" style="left:1235px;top:103px;width:7px;height:1px;background:#b8b8b8;"></div>
<div class="t" style="left:1290px;top:91px;font-size:14px;line-height:14px;color:#dadada;font-weight:400;">*</div>
<div class="a" style="left:834px;top:91px;width:17px;height:17px;border:1px solid #7a7a7a;border-radius:2px;background:#2f2f2f"></div>
<svg style="left:834px;top:91px;" width="17" height="17" viewBox="0 0 17 17"><path d="M5.2 5.2 L11.8 11.8 M11.8 5.2 L5.2 11.8" stroke="#f4f4f4" stroke-width="2.2"/></svg>
<div class="a" style="left:1625px;top:90px;width:17px;height:17px;border:1px solid #7a7a7a;border-radius:2px;background:#2f2f2f"></div>
<svg style="left:1625px;top:90px;" width="17" height="17" viewBox="0 0 17 17"><path d="M5.2 5.2 L11.8 11.8 M11.8 5.2 L5.2 11.8" stroke="#f4f4f4" stroke-width="2.2"/></svg>
<div class="a" style="left:74px;top:114px;width:1568px;height:875px;background:#8cb6fa;"></div>
<div class="a" style="left:1469px;top:114px;width:64px;height:23px;background:#8db2ee;"></div>
<div class="a" style="left:1533px;top:114px;width:64px;height:23px;background:#9cb8e4;"></div>
<div class="a" style="left:1597px;top:114px;width:45px;height:23px;background:#000419;"></div>
<div class="a" style="left:1405px;top:114px;width:64px;height:23px;background:#8db3fa;"></div>
<div class="a" style="left:1469px;top:137px;width:64px;height:64px;background:#8db2ee;"></div>
<div class="a" style="left:1533px;top:137px;width:64px;height:64px;background:#9cb8e4;"></div>
<div class="a" style="left:1597px;top:137px;width:45px;height:64px;background:#000419;"></div>
<div class="a" style="left:1405px;top:137px;width:64px;height:64px;background:#8db3fa;"></div>
<div class="a" style="left:1469px;top:201px;width:64px;height:64px;background:#8db2ee;"></div>
<div class="a" style="left:1533px;top:201px;width:64px;height:64px;background:#9cb8e4;"></div>
<div class="a" style="left:1597px;top:201px;width:45px;height:64px;background:#000419;"></div>
<div class="a" style="left:1405px;top:201px;width:64px;height:64px;background:#8db3fa;"></div>
<div class="a" style="left:1469px;top:265px;width:64px;height:64px;background:#8db2ee;"></div>
<div class="a" style="left:1533px;top:265px;width:64px;height:64px;background:#9cb8e4;"></div>
<div class="a" style="left:1597px;top:265px;width:45px;height:64px;background:#000419;"></div>
<div class="a" style="left:1405px;top:265px;width:64px;height:64px;background:#8db3fa;"></div>
<div class="a" style="left:1469px;top:329px;width:64px;height:64px;background:#8db2ee;"></div>
<div class="a" style="left:1533px;top:329px;width:64px;height:64px;background:#9cb8e4;"></div>
<div class="a" style="left:1597px;top:329px;width:45px;height:64px;background:#000419;"></div>
<div class="a" style="left:1405px;top:329px;width:64px;height:64px;background:#8db3fa;"></div>
<div class="a" style="left:1469px;top:393px;width:64px;height:64px;background:#8db2ee;"></div>
<div class="a" style="left:1533px;top:393px;width:64px;height:64px;background:#9cb8e4;"></div>
<div class="a" style="left:1597px;top:393px;width:45px;height:64px;background:#000419;"></div>
<div class="a" style="left:1405px;top:393px;width:64px;height:64px;background:#8db3fa;"></div>
<div class="a" style="left:1469px;top:457px;width:64px;height:64px;background:#8db2ee;"></div>
<div class="a" style="left:1533px;top:457px;width:64px;height:64px;background:#9cb8e4;"></div>
<div class="a" style="left:1597px;top:457px;width:45px;height:64px;background:#000419;"></div>
<div class="a" style="left:1405px;top:457px;width:64px;height:64px;background:#8db3fa;"></div>
<div class="a" style="left:1469px;top:521px;width:64px;height:64px;background:#8db2ee;"></div>
<div class="a" style="left:1533px;top:521px;width:64px;height:64px;background:#9cb8e4;"></div>
<div class="a" style="left:1597px;top:521px;width:45px;height:64px;background:#000419;"></div>
<div class="a" style="left:1405px;top:521px;width:64px;height:64px;background:#8db3fa;"></div>
<div class="a" style="left:1469px;top:585px;width:64px;height:64px;background:#8db2ee;"></div>
<div class="a" style="left:1533px;top:585px;width:64px;height:64px;background:#9cb8e4;"></div>
<div class="a" style="left:1597px;top:585px;width:45px;height:64px;background:#000419;"></div>
<div class="a" style="left:1405px;top:585px;width:64px;height:64px;background:#8db3fa;"></div>
<div class="a" style="left:1469px;top:649px;width:64px;height:64px;background:#8db2ee;"></div>
<div class="a" style="left:1533px;top:649px;width:64px;height:64px;background:#9cb8e4;"></div>
<div class="a" style="left:1597px;top:649px;width:45px;height:64px;background:#000419;"></div>
<div class="a" style="left:1405px;top:649px;width:64px;height:64px;background:#8db3fa;"></div>
<div class="a" style="left:1469px;top:713px;width:64px;height:64px;background:#8db2ee;"></div>
<div class="a" style="left:1533px;top:713px;width:64px;height:64px;background:#9cb8e4;"></div>
<div class="a" style="left:1597px;top:713px;width:45px;height:64px;background:#000419;"></div>
<div class="a" style="left:1405px;top:713px;width:64px;height:64px;background:#8db3fa;"></div>
<div class="a" style="left:1469px;top:777px;width:64px;height:64px;background:#8db2ee;"></div>
<div class="a" style="left:1533px;top:777px;width:64px;height:64px;background:#9cb8e4;"></div>
<div class="a" style="left:1597px;top:777px;width:45px;height:64px;background:#000419;"></div>
<div class="a" style="left:1405px;top:777px;width:64px;height:64px;background:#8db3fa;"></div>
<div class="a" style="left:1469px;top:841px;width:64px;height:64px;background:#8db2ee;"></div>
<div class="a" style="left:1533px;top:841px;width:64px;height:64px;background:#9cb8e4;"></div>
<div class="a" style="left:1597px;top:841px;width:45px;height:64px;background:#000419;"></div>
<div class="a" style="left:1405px;top:841px;width:64px;height:64px;background:#8db3fa;"></div>
<div class="a" style="left:1469px;top:905px;width:64px;height:64px;background:#8db2ee;"></div>
<div class="a" style="left:1533px;top:905px;width:64px;height:64px;background:#9cb8e4;"></div>
<div class="a" style="left:1597px;top:905px;width:45px;height:64px;background:#000419;"></div>
<div class="a" style="left:1405px;top:905px;width:64px;height:64px;background:#8db3fa;"></div>
<div class="a" style="left:1469px;top:969px;width:64px;height:20px;background:#8db2ee;"></div>
<div class="a" style="left:1533px;top:969px;width:64px;height:20px;background:#9cb8e4;"></div>
<div class="a" style="left:1597px;top:969px;width:45px;height:20px;background:#000419;"></div>
<div class="a" style="left:1405px;top:969px;width:64px;height:20px;background:#8db3fa;"></div>
<div class="a" style="left:1149px;top:114px;width:64px;height:23px;background:#88b4f9;"></div>
<div class="a" style="left:1213px;top:114px;width:64px;height:23px;background:#88b4f9;"></div>
<div class="a" style="left:1277px;top:114px;width:64px;height:23px;background:#89b5fa;"></div>
<div class="a" style="left:1149px;top:137px;width:64px;height:64px;background:#88b4f9;"></div>
<div class="a" style="left:1213px;top:137px;width:64px;height:64px;background:#88b4f9;"></div>
<div class="a" style="left:1277px;top:137px;width:64px;height:64px;background:#89b5fa;"></div>
<div class="a" style="left:1149px;top:201px;width:64px;height:64px;background:#88b4f9;"></div>
<div class="a" style="left:1213px;top:201px;width:64px;height:64px;background:#88b4f9;"></div>
<div class="a" style="left:1277px;top:201px;width:64px;height:64px;background:#89b5fa;"></div>
<div class="a" style="left:1149px;top:265px;width:64px;height:64px;background:#88b4f9;"></div>
<div class="a" style="left:1213px;top:265px;width:64px;height:64px;background:#88b4f9;"></div>
<div class="a" style="left:1277px;top:265px;width:64px;height:64px;background:#89b5fa;"></div>
<div class="a" style="left:1149px;top:329px;width:64px;height:64px;background:#88b4f9;"></div>
<div class="a" style="left:1213px;top:329px;width:64px;height:64px;background:#88b4f9;"></div>
<div class="a" style="left:1277px;top:329px;width:64px;height:64px;background:#89b5fa;"></div>
<div class="a" style="left:1149px;top:393px;width:64px;height:64px;background:#89b3f9;"></div>
<div class="a" style="left:1213px;top:393px;width:64px;height:64px;background:#88b4f9;"></div>
<div class="a" style="left:1277px;top:393px;width:64px;height:64px;background:#89b5fa;"></div>
<div class="a" style="left:1149px;top:457px;width:64px;height:64px;background:#88b4f9;"></div>
<div class="a" style="left:1213px;top:457px;width:64px;height:64px;background:#88b4f9;"></div>
<div class="a" style="left:1277px;top:457px;width:64px;height:64px;background:#89b5fa;"></div>
<div class="a" style="left:1149px;top:521px;width:64px;height:64px;background:#88b4f9;"></div>
<div class="a" style="left:1213px;top:521px;width:64px;height:64px;background:#88b4f9;"></div>
<div class="a" style="left:1277px;top:521px;width:64px;height:64px;background:#89b5fa;"></div>
<div class="a" style="left:1149px;top:585px;width:64px;height:64px;background:#86b1f6;"></div>
<div class="a" style="left:1213px;top:585px;width:64px;height:64px;background:#88b4f9;"></div>
<div class="a" style="left:1277px;top:585px;width:64px;height:64px;background:#89b5fa;"></div>
<div class="a" style="left:1149px;top:649px;width:64px;height:64px;background:#88b4f9;"></div>
<div class="a" style="left:1213px;top:649px;width:64px;height:64px;background:#88b4f9;"></div>
<div class="a" style="left:1277px;top:649px;width:64px;height:64px;background:#89b5fa;"></div>
<div class="a" style="left:1149px;top:713px;width:64px;height:64px;background:#88b2f8;"></div>
<div class="a" style="left:1213px;top:713px;width:64px;height:64px;background:#88b4f9;"></div>
<div class="a" style="left:1277px;top:713px;width:64px;height:64px;background:#89b5fa;"></div>
<div class="a" style="left:1149px;top:777px;width:64px;height:64px;background:#88b4f9;"></div>
<div class="a" style="left:1213px;top:777px;width:64px;height:64px;background:#88b4f9;"></div>
<div class="a" style="left:1277px;top:777px;width:64px;height:64px;background:#89b5fa;"></div>
<div class="a" style="left:1149px;top:841px;width:64px;height:64px;background:#88b4f9;"></div>
<div class="a" style="left:1213px;top:841px;width:64px;height:64px;background:#88b4f9;"></div>
<div class="a" style="left:1277px;top:841px;width:64px;height:64px;background:#89b5fa;"></div>
<div class="a" style="left:1149px;top:905px;width:64px;height:64px;background:#88b4f9;"></div>
<div class="a" style="left:1213px;top:905px;width:64px;height:64px;background:#88b4f9;"></div>
<div class="a" style="left:1277px;top:905px;width:64px;height:64px;background:#89b5fa;"></div>
<div class="a" style="left:1149px;top:969px;width:64px;height:20px;background:#88b4f9;"></div>
<div class="a" style="left:1213px;top:969px;width:64px;height:20px;background:#88b4f9;"></div>
<div class="a" style="left:1277px;top:969px;width:64px;height:20px;background:#89b5fa;"></div>
<div class="a" style="left:765px;top:393px;width:64px;height:64px;background:#88b2f7;"></div>
<div class="a" style="left:829px;top:393px;width:64px;height:64px;background:#89b3f8;"></div>
<div class="a" style="left:893px;top:393px;width:64px;height:64px;background:#8eb8fc;"></div>
<div class="a" style="left:957px;top:393px;width:64px;height:64px;background:#8db8fc;"></div>
<div class="a" style="left:1021px;top:393px;width:64px;height:64px;background:#88b2f7;"></div>
<div class="a" style="left:1085px;top:393px;width:64px;height:64px;background:#8eb8fc;"></div>
<div class="a" style="left:765px;top:457px;width:64px;height:64px;background:#91bbfd;"></div>
<div class="a" style="left:829px;top:457px;width:64px;height:64px;background:#93bdfd;"></div>
<div class="a" style="left:893px;top:457px;width:64px;height:64px;background:#8bb5fa;"></div>
<div class="a" style="left:957px;top:457px;width:64px;height:64px;background:#86aff3;"></div>
<div class="a" style="left:1085px;top:457px;width:64px;height:64px;background:#8ab4f9;"></div>
<div class="a" style="left:701px;top:521px;width:64px;height:64px;background:#8fb9fd;"></div>
<div class="a" style="left:765px;top:521px;width:64px;height:64px;background:#87b0f6;"></div>
<div class="a" style="left:829px;top:521px;width:64px;height:64px;background:#88b2f7;"></div>
<div class="a" style="left:893px;top:521px;width:64px;height:64px;background:#8db7fb;"></div>
<div class="a" style="left:957px;top:521px;width:64px;height:64px;background:#8ab4f9;"></div>
<div class="a" style="left:1085px;top:521px;width:64px;height:64px;background:#89b3f9;"></div>
<div class="a" style="left:701px;top:585px;width:64px;height:64px;background:#89b3f8;"></div>
<div class="a" style="left:765px;top:585px;width:64px;height:64px;background:#91bbfd;"></div>
<div class="a" style="left:893px;top:585px;width:64px;height:64px;background:#86b0f5;"></div>
<div class="a" style="left:957px;top:585px;width:64px;height:64px;background:#8eb8fc;"></div>
<div class="a" style="left:1085px;top:585px;width:64px;height:64px;background:#88b1f8;"></div>
<div class="a" style="left:765px;top:649px;width:64px;height:64px;background:#89b3f8;"></div>
<div class="a" style="left:893px;top:649px;width:64px;height:64px;background:#8eb8fc;"></div>
<div class="a" style="left:957px;top:649px;width:64px;height:64px;background:#87b1f5;"></div>
<div class="a" style="left:1085px;top:649px;width:64px;height:64px;background:#8ab4f9;"></div>
<div class="a" style="left:701px;top:457px;width:64px;height:64px;background:#00185a;"></div>
<div class="a" style="left:125px;top:114px;width:1px;height:875px;background:rgba(255,255,255,0.55);"></div>
<div class="a" style="left:189px;top:114px;width:1px;height:875px;background:rgba(255,255,255,0.55);"></div>
<div class="a" style="left:253px;top:114px;width:1px;height:875px;background:rgba(255,255,255,0.55);"></div>
<div class="a" style="left:317px;top:114px;width:1px;height:875px;background:rgba(255,255,255,0.55);"></div>
<div class="a" style="left:381px;top:114px;width:1px;height:875px;background:rgba(255,255,255,0.55);"></div>
<div class="a" style="left:445px;top:114px;width:1px;height:875px;background:rgba(255,255,255,0.55);"></div>
<div class="a" style="left:509px;top:114px;width:1px;height:875px;background:rgba(255,255,255,0.55);"></div>
<div class="a" style="left:573px;top:114px;width:1px;height:875px;background:rgba(255,255,255,0.55);"></div>
<div class="a" style="left:637px;top:114px;width:1px;height:875px;background:rgba(255,255,255,0.55);"></div>
<div class="a" style="left:701px;top:114px;width:1px;height:875px;background:rgba(255,255,255,0.55);"></div>
<div class="a" style="left:764px;top:114px;width:1px;height:875px;background:rgba(255,255,255,0.55);"></div>
<div class="a" style="left:828px;top:114px;width:1px;height:875px;background:rgba(255,255,255,0.55);"></div>
<div class="a" style="left:892px;top:114px;width:1px;height:875px;background:rgba(255,255,255,0.55);"></div>
<div class="a" style="left:956px;top:114px;width:1px;height:875px;background:rgba(255,255,255,0.55);"></div>
<div class="a" style="left:1020px;top:114px;width:1px;height:875px;background:rgba(255,255,255,0.55);"></div>
<div class="a" style="left:1084px;top:114px;width:1px;height:875px;background:rgba(255,255,255,0.55);"></div>
<div class="a" style="left:1148px;top:114px;width:1px;height:875px;background:rgba(255,255,255,0.55);"></div>
<div class="a" style="left:1212px;top:114px;width:1px;height:875px;background:rgba(255,255,255,0.55);"></div>
<div class="a" style="left:1276px;top:114px;width:1px;height:875px;background:rgba(255,255,255,0.55);"></div>
<div class="a" style="left:1340px;top:114px;width:1px;height:875px;background:rgba(255,255,255,0.55);"></div>
<div class="a" style="left:1404px;top:114px;width:1px;height:875px;background:rgba(255,255,255,0.55);"></div>
<div class="a" style="left:1468px;top:114px;width:1px;height:875px;background:rgba(255,255,255,0.55);"></div>
<div class="a" style="left:1532px;top:114px;width:1px;height:875px;background:rgba(255,255,255,0.55);"></div>
<div class="a" style="left:1596px;top:114px;width:1px;height:875px;background:rgba(255,255,255,0.55);"></div>
<div class="a" style="left:74px;top:137px;width:1568px;height:1px;background:rgba(255,255,255,0.55);"></div>
<div class="a" style="left:74px;top:201px;width:1568px;height:1px;background:rgba(255,255,255,0.55);"></div>
<div class="a" style="left:74px;top:265px;width:1568px;height:1px;background:rgba(255,255,255,0.55);"></div>
<div class="a" style="left:74px;top:329px;width:1568px;height:1px;background:rgba(255,255,255,0.55);"></div>
<div class="a" style="left:74px;top:393px;width:1568px;height:1px;background:rgba(255,255,255,0.55);"></div>
<div class="a" style="left:74px;top:457px;width:1568px;height:1px;background:rgba(255,255,255,0.55);"></div>
<div class="a" style="left:74px;top:521px;width:1568px;height:1px;background:rgba(255,255,255,0.55);"></div>
<div class="a" style="left:74px;top:585px;width:1568px;height:1px;background:rgba(255,255,255,0.55);"></div>
<div class="a" style="left:74px;top:649px;width:1568px;height:1px;background:rgba(255,255,255,0.55);"></div>
<div class="a" style="left:74px;top:713px;width:1568px;height:1px;background:rgba(255,255,255,0.55);"></div>
<div class="a" style="left:74px;top:777px;width:1568px;height:1px;background:rgba(255,255,255,0.55);"></div>
<div class="a" style="left:74px;top:841px;width:1568px;height:1px;background:rgba(255,255,255,0.55);"></div>
<div class="a" style="left:74px;top:905px;width:1568px;height:1px;background:rgba(255,255,255,0.55);"></div>
<div class="a" style="left:74px;top:969px;width:1568px;height:1px;background:rgba(255,255,255,0.55);"></div>
<div class="a" style="left:1596px;top:114px;width:1px;height:875px;background:#dfe9fa;"></div>
<div class="a" style="left:769px;top:210px;width:1px;height:14px;background:#3c3c00;"></div>
<div class="a" style="left:763px;top:217px;width:14px;height:1px;background:#3c3c00;"></div>
<div class="a" style="left:1642px;top:114px;width:14px;height:875px;background:#3d3d3d;"></div>
<div class="a" style="left:74px;top:989px;width:1568px;height:14px;background:#3c3c3c;"></div>
<div class="a" style="left:1643px;top:114px;width:13px;height:13px;border:1px solid #555;background:#3e3e3e"></div>
<svg style="left:1645px;top:117px;" width="9" height="6" viewBox="0 0 9 6"><path d="M0.5 5 H8.5 L4.5 1 Z" fill="#8a8a8a"/></svg>
<div class="a" style="left:1643px;top:977px;width:13px;height:13px;border:1px solid #555;background:#3e3e3e"></div>
<svg style="left:1645px;top:981px;" width="9" height="6" viewBox="0 0 9 6"><path d="M0.5 1 H8.5 L4.5 5 Z" fill="#8a8a8a"/></svg>
<div class="a" style="left:1643px;top:166px;width:13px;height:26px;border:1px solid #555;background:#3e3e3e"></div>
<div class="a" style="left:74px;top:990px;width:14px;height:13px;border:1px solid #555;background:#3e3e3e"></div>
<svg style="left:77px;top:992px;" width="6" height="9" viewBox="0 0 6 9"><path d="M5 0.5 V8.5 L1 4.5 Z" fill="#8a8a8a"/></svg>
<div class="a" style="left:1628px;top:990px;width:14px;height:13px;border:1px solid #555;background:#3e3e3e"></div>
<svg style="left:1632px;top:992px;" width="6" height="9" viewBox="0 0 6 9"><path d="M1 0.5 V8.5 L5 4.5 Z" fill="#8a8a8a"/></svg>
<div class="a" style="left:1383px;top:990px;width:118px;height:13px;border:1px solid #555;background:#3e3e3e"></div>
<div class="a" style="left:1656px;top:82px;width:7px;height:921px;background:#474747;"></div>
<div class="a" style="left:1659px;top:536px;width:2px;height:2px;background:#8a8a8a;"></div>
<div class="a" style="left:1659px;top:539px;width:2px;height:2px;background:#8a8a8a;"></div>
<div class="a" style="left:1659px;top:542px;width:2px;height:2px;background:#8a8a8a;"></div>
<div class="a" style="left:1659px;top:545px;width:2px;height:2px;background:#8a8a8a;"></div>
<div class="a" style="left:1659px;top:548px;width:2px;height:2px;background:#8a8a8a;"></div>
<div class="a" style="left:1659px;top:551px;width:2px;height:2px;background:#8a8a8a;"></div>
<div class="a" style="left:1663px;top:82px;width:257px;height:921px;background:#474747;"></div>
<div class="a" style="left:1663px;top:83px;width:111px;height:23px;background:#494949;border:1px solid #5e5e5e;border-bottom:none;border-radius:4px 4px 0 0"></div>
<div class="a" style="left:1775px;top:85px;width:99px;height:20px;background:#404040;border:1px solid #585858;border-bottom:none;border-radius:4px 4px 0 0"></div>
<div class="a" style="left:1875px;top:85px;width:44px;height:20px;background:#404040;border:1px solid #585858;border-bottom:none;border-radius:4px 4px 0 0"></div>
<div class="a" style="left:1774px;top:105px;width:146px;height:1px;background:#575757;"></div>
<div class="t" style="left:1675px;top:90px;font-size:9.7px;line-height:9.7px;color:#dcdcdc;font-weight:400;">Расширенный вы...</div>
<div class="t" style="left:1787px;top:90px;font-size:9.7px;line-height:9.7px;color:#d0d0d0;font-weight:400;">Параметры ин...</div>
<div class="t" style="left:1887px;top:90px;font-size:9.7px;line-height:9.7px;color:#d0d0d0;font-weight:400;">Об...</div>
<div class="t" style="left:1666px;top:111px;font-size:9.7px;line-height:9.7px;color:#dcdcdc;font-weight:400;">Расширенный выбор цвета</div>
<svg style="left:1893px;top:110px;" width="26" height="12" viewBox="0 0 26 12"><path d="M2 0.5 H9 L10.5 2 V9 L9 10.5 H2 L0.5 9 V2 Z" fill="none" stroke="#777" stroke-width="1"/><rect x="2.5" y="3" width="4" height="4.5" fill="none" stroke="#7a7a7a" stroke-width="1"/><path d="M7.5 2 V5.5 H6.5" fill="none" stroke="#7a7a7a" stroke-width="1"/><path d="M16 0.5 H23 L24.5 2 V9 L23 10.5 H16 L14.5 9 V2 Z" fill="none" stroke="#777" stroke-width="1"/><path d="M16.5 2.5 L22.5 8.5 M22.5 2.5 L16.5 8.5" stroke="#7a7a7a" stroke-width="1.6"/></svg>
<div class="a" style="left:1663px;top:126px;width:240px;height:228px;background:#808080;"></div>
<svg style="left:1672px;top:135px;" width="14" height="14" viewBox="0 0 14 14"><rect x="0.5" y="0.5" width="12" height="12" fill="none" stroke="#e6e6e6" stroke-width="1"/><rect x="0.5" y="0.5" width="12" height="2" fill="#e6e6e6"/><rect x="2.5" y="4" width="2" height="6" fill="#e6e6e6"/><path d="M6 5 H11 M6 7.5 H11 M6 10 H11" stroke="#e6e6e6" stroke-width="1"/></svg>
<div class="a" style="left:1686.7px;top:126.50000000000001px;width:191.6px;height:191.6px;border-radius:50%;background:conic-gradient(from -90deg,#ff0000,#ffff00,#00ff00,#00ffff,#0000ff,#ff00ff,#ff0000);-webkit-mask:radial-gradient(circle,transparent 80.0px,#000 81.0px,#000 95.1px,transparent 96.1px)"></div>
<svg style="left:0;top:0;isolation:isolate" width="1920" height="1030" viewBox="0 0 1920 1030"><defs>
<linearGradient id="tw" gradientUnits="userSpaceOnUse" x1="1715.3" y1="262" x2="1818.20" y2="202.16"><stop offset="0" stop-color="#fff"/><stop offset="1" stop-color="#fff" stop-opacity="0"/></linearGradient>
<linearGradient id="th" gradientUnits="userSpaceOnUse" x1="1853" y1="262" x2="1749.57" y2="202.46"><stop offset="0" stop-color="#00ff4c"/><stop offset="1" stop-color="#00ff4c" stop-opacity="0"/></linearGradient>
<clipPath id="tri"><path d="M1783.8 143 L1715.3 262 L1853 262 Z"/></clipPath>
</defs>
<g clip-path="url(#tri)" style="isolation:isolate">
<rect x="1700" y="130" width="170" height="140" fill="#000"/>
<rect x="1700" y="130" width="170" height="140" fill="url(#tw)"/>
<rect x="1700" y="130" width="170" height="140" fill="url(#th)" style="mix-blend-mode:plus-lighter"/>
</g></svg>
<svg style="left:0px;top:0px;" width="1920" height="1030" viewBox="0 0 1920 1030"><circle cx="1779" cy="150.8" r="4.3" fill="none" stroke="#111" stroke-width="2.2"/><circle cx="1779" cy="150.8" r="4.3" fill="none" stroke="#e8e8e8" stroke-width="1"/><path d="M1844.5 169.5 L1856 160" stroke="#111" stroke-width="1.4"/><path d="M1845.5 171 L1857 161.5" stroke="#f0f0f0" stroke-width="1"/></svg>
<div class="a" style="left:1663px;top:320px;width:240px;height:10px;background:#0f1612;"></div>
<div class="a" style="left:1663px;top:331px;width:116px;height:10px;background:#000;"></div>
<div class="a" style="left:1789px;top:331px;width:114px;height:10px;background:linear-gradient(to right,#131d16,#2a5a36 40%,#2a8446 75%,#1fa24c)"></div>
<div class="a" style="left:1663px;top:342px;width:116px;height:10px;background:#000;"></div>
<div class="a" style="left:1789px;top:342px;width:114px;height:10px;background:linear-gradient(to right,#141915,#4a4c4a 38%,#808080 70%,#9c9c9c)"></div>
<div class="a" style="left:1663px;top:330px;width:240px;height:1px;background:#8a8a8a;"></div>
<div class="a" style="left:1663px;top:341px;width:240px;height:1px;background:#8a8a8a;"></div>
<div class="a" style="left:1663px;top:352px;width:240px;height:3px;background:#878787;"></div>
<div class="a" style="left:1778px;top:320px;width:11px;height:33px;border-left:1px solid #b0b0b0;border-right:1px solid #b0b0b0;background:transparent"></div>
<div class="a" style="left:1780px;top:320px;width:7px;height:10px;background:#1a221d;"></div>
<div class="a" style="left:1780px;top:331px;width:7px;height:10px;background:#0f1411;"></div>
<div class="a" style="left:1780px;top:342px;width:7px;height:10px;background:#0f1411;"></div>
<div class="a" style="left:1663px;top:356px;width:16px;height:15px;border:1px solid #303030;border-radius:3px;background:#474747;box-shadow:inset 0 0 0 1px #555"></div>
<svg style="left:1664px;top:357px;" width="14" height="14" viewBox="0 0 14 14"><path d="M3 9.5 A4.6 4.6 0 0 1 9.5 3" fill="none" stroke="#bdbdbd" stroke-width="1"/><path d="M11 4.5 A4.6 4.6 0 0 1 4.5 11" fill="none" stroke="#bdbdbd" stroke-width="1"/><path d="M8 1.5 L10 3 L8 4.5 M6 9.5 L4 11 L6 12.5" fill="none" stroke="#bdbdbd" stroke-width="1"/></svg>
<div class="a" style="left:1784px;top:374px;width:2px;height:2px;background:#8a8a8a;"></div>
<div class="a" style="left:1787px;top:374px;width:2px;height:2px;background:#8a8a8a;"></div>
<div class="a" style="left:1790px;top:374px;width:2px;height:2px;background:#8a8a8a;"></div>
<div class="a" style="left:1793px;top:374px;width:2px;height:2px;background:#8a8a8a;"></div>
<div class="a" style="left:1796px;top:374px;width:2px;height:2px;background:#8a8a8a;"></div>
<div class="a" style="left:1799px;top:374px;width:2px;height:2px;background:#8a8a8a;"></div>
<div class="a" style="left:1663px;top:381px;width:58px;height:20px;background:#404040;border:1px solid #585858;border-bottom:none;border-radius:4px 4px 0 0"></div>
<div class="a" style="left:1722px;top:379px;width:46px;height:22px;background:#494949;border:1px solid #5e5e5e;border-bottom:none;border-radius:4px 4px 0 0"></div>
<div class="a" style="left:1663px;top:401px;width:59px;height:1px;background:#575757;"></div>
<div class="a" style="left:1768px;top:401px;width:152px;height:1px;background:#575757;"></div>
<div class="t" style="left:1675px;top:387px;font-size:9.7px;line-height:9.7px;color:#d0d0d0;font-weight:400;">Каналы</div>
<div class="t" style="left:1734px;top:386px;font-size:9.7px;line-height:9.7px;color:#dcdcdc;font-weight:400;">Слои</div>
<div class="t" style="left:1666px;top:407px;font-size:9.7px;line-height:9.7px;color:#dcdcdc;font-weight:400;">Слои</div>
<svg style="left:1893px;top:406px;" width="26" height="12" viewBox="0 0 26 12"><path d="M2 0.5 H9 L10.5 2 V9 L9 10.5 H2 L0.5 9 V2 Z" fill="none" stroke="#777" stroke-width="1"/><rect x="2.5" y="3" width="4" height="4.5" fill="none" stroke="#7a7a7a" stroke-width="1"/><path d="M7.5 2 V5.5 H6.5" fill="none" stroke="#7a7a7a" stroke-width="1"/><path d="M16 0.5 H23 L24.5 2 V9 L23 10.5 H16 L14.5 9 V2 Z" fill="none" stroke="#777" stroke-width="1"/><path d="M16.5 2.5 L22.5 8.5 M22.5 2.5 L16.5 8.5" stroke="#7a7a7a" stroke-width="1.6"/></svg>
<div class="a" style="left:1664px;top:423px;width:211px;height:21px;border:1px solid #2e2e2e;border-radius:3px;background:#434343;box-shadow:inset 0 1px 0 #525252"></div>
<div class="t" style="left:1668px;top:430px;font-size:9.7px;line-height:9.7px;color:#dcdcdc;font-weight:400;">Normal</div>
<svg style="left:1860px;top:432px;" width="9" height="5" viewBox="0 0 9 5"><path d="M0 0 H8 L4 4 Z" fill="#b8b8b8"/></svg>
<div class="a" style="left:1878px;top:423px;width:40px;height:21px;border:1px solid #2e2e2e;border-radius:3px;background:#434343;box-shadow:inset 0 1px 0 #525252"></div>
<svg style="left:1883px;top:425px;" width="14" height="16" viewBox="0 0 14 16"><path d="M1 2 H12 L7.5 8.5 V14 L5.5 12.5 V8.5 Z" fill="none" stroke="#cfcfcf" stroke-width="1"/></svg>
<svg style="left:1904px;top:432px;" width="9" height="5" viewBox="0 0 9 5"><path d="M0 0 H8 L4 4 Z" fill="#b8b8b8"/></svg>
<div class="a" style="left:1664px;top:446px;width:210px;height:28px;border:1px solid #2e2e2e;border-radius:3px 0 0 3px;background:#50708e"></div>
<div class="t" style="left:1713px;top:456px;font-size:10px;line-height:10px;color:#e6e6e6;font-weight:400;">Непрозрачность:  100%</div>
<div class="a" style="left:1873px;top:446px;width:15px;height:28px;border:1px solid #2e2e2e;border-left:none;border-radius:0 3px 3px 0;background:#3e3e3e;box-shadow:inset -1px 0 0 #555"></div>
<svg style="left:1876px;top:452px;" width="9" height="5" viewBox="0 0 9 5"><path d="M0.5 4.5 H7.5 L4 1 Z" fill="#666"/></svg>
<svg style="left:1876px;top:464px;" width="9" height="5" viewBox="0 0 9 5"><path d="M0.5 0.5 H7.5 L4 4 Z" fill="#bdbdbd"/></svg>
<div class="a" style="left:1889px;top:446px;width:29px;height:28px;border:1px solid #2e2e2e;border-radius:3px;background:#474747;box-shadow:inset 0 0 0 1px #545454"></div>
<svg style="left:1895px;top:451px;" width="19" height="18" viewBox="0 0 19 18"><rect x="0.7" y="0.7" width="15" height="15" fill="none" stroke="#e6e6e6" stroke-width="1.4"/><rect x="0.7" y="0.7" width="15" height="2.6" fill="#e6e6e6"/><rect x="3" y="5.5" width="2" height="8" fill="#e6e6e6"/><path d="M7 7 H14 M7 10 H14 M7 13 H14" stroke="#e6e6e6" stroke-width="1.2"/><path d="M14 16 H18 L16 18 Z" fill="#bbb"/></svg>
<div class="a" style="left:1663px;top:476px;width:256px;height:496px;background:#3a3a3a;"></div>
<div class="a" style="left:1663px;top:476px;width:256px;height:26px;background:#3d3d3d;"></div>
<div class="a" style="left:1687px;top:476px;width:26px;height:26px;background:#50708e;"></div>
<div class="a" style="left:1714px;top:476px;width:14px;height:26px;background:#50708e;"></div>
<div class="a" style="left:1729px;top:476px;width:131px;height:26px;background:#50708e;"></div>
<div class="a" style="left:1861px;top:476px;width:18px;height:26px;background:#50708e;"></div>
<div class="a" style="left:1880px;top:476px;width:18px;height:26px;background:#50708e;"></div>
<div class="a" style="left:1899px;top:476px;width:19px;height:26px;background:#50708e;"></div>
<svg style="left:0px;top:0px;" width="1920" height="1030" viewBox="0 0 1920 1030"><path d="M1668 489 C1670 482.5 1680 482.5 1682 489" fill="none" stroke="#e6e6e6" stroke-width="1.3"/><path d="M1668 491.5 C1670 496.5 1680 496.5 1682 491.5" fill="none" stroke="#e6e6e6" stroke-width="1.3"/><circle cx="1675" cy="487.6" r="3.6" fill="#e6e6e6"/></svg>
<div class="a" style="left:1697px;top:479px;width:5px;height:21px;background:#000;"></div>
<div class="a" style="left:1698px;top:481px;width:3px;height:2px;background:#9cc0ff;"></div>
<div class="a" style="left:1698px;top:484px;width:3px;height:2px;background:#e8eefc;"></div>
<div class="a" style="left:1698px;top:487px;width:3px;height:2px;background:#9cc0ff;"></div>
<div class="a" style="left:1698px;top:490px;width:3px;height:2px;background:#e8eefc;"></div>
<div class="a" style="left:1698px;top:493px;width:3px;height:2px;background:#9cc0ff;"></div>
<div class="a" style="left:1698px;top:496px;width:3px;height:2px;background:#e8eefc;"></div>
<svg style="left:1714px;top:477px;" width="14" height="14" viewBox="0 0 14 14"><path d="M4.5 1.5 H11.5 V8.5 L9 11.5 H4.5 V6.5" fill="none" stroke="#d8d8d8" stroke-width="1"/><path d="M1.5 3.5 L7 9" stroke="#d8d8d8" stroke-width="1"/></svg>
<div class="t" style="left:1745px;top:484px;font-size:10px;line-height:10px;color:#e0e0e0;font-weight:700;">Background</div>
<svg style="left:1862px;top:482px;" width="16" height="15" viewBox="0 0 16 15"><path d="M4 7 V4.5 C4 2 8 1.5 9 4" fill="none" stroke="#6f8aa6" stroke-width="2"/><rect x="2" y="7" width="10" height="7" fill="#6f8aa6"/></svg>
<div class="t" style="left:1879px;top:476px;font-size:22px;line-height:22px;color:#7690ab;font-style:italic;font-family:Liberation Serif,serif;transform:scaleX(1.25);transform-origin:left top">α</div>
<svg style="left:0px;top:0px;" width="1920" height="1030" viewBox="0 0 1920 1030"><rect x="1901" y="481" width="5" height="5" fill="#6a86a3"/><rect x="1906" y="481" width="5" height="5" fill="#8aa3bc"/><rect x="1911" y="481" width="5" height="5" fill="#6a86a3"/><rect x="1901" y="486" width="5" height="5" fill="#8aa3bc"/><rect x="1906" y="486" width="5" height="5" fill="#6a86a3"/><rect x="1911" y="486" width="5" height="5" fill="#8aa3bc"/><rect x="1901" y="491" width="5" height="5" fill="#6a86a3"/><rect x="1906" y="491" width="5" height="5" fill="#8aa3bc"/><rect x="1911" y="491" width="5" height="5" fill="#6a86a3"/></svg>
<svg style="left:1666px;top:978px;" width="20" height="18" viewBox="0 0 20 18"><rect x="1.7" y="1.7" width="14.6" height="14.6" fill="none" stroke="#d0d0d0" stroke-width="1.8"/><path d="M9 5 V13 M5 9 H13" stroke="#d0d0d0" stroke-width="1.8"/></svg>
<svg style="left:1689px;top:985px;" width="9" height="5" viewBox="0 0 9 5"><path d="M0 0 H8 L4 4 Z" fill="#9a9a9a"/></svg>
<svg style="left:1707px;top:978px;" width="19" height="18" viewBox="0 0 19 18"><path d="M1.6 6 V16.4 H12" fill="none" stroke="#d0d0d0" stroke-width="1.6"/><rect x="5.3" y="1.8" width="11.4" height="11.4" fill="none" stroke="#d0d0d0" stroke-width="1.6"/></svg>
<svg style="left:1739px;top:981px;" width="19" height="13" viewBox="0 0 19 13"><path d="M1.5 2 L9 9.5 L16.5 2" fill="none" stroke="#d0d0d0" stroke-width="1.7"/></svg>
<svg style="left:1771px;top:980px;" width="19" height="13" viewBox="0 0 19 13"><path d="M1.5 10 L9 2.5 L16.5 10" fill="none" stroke="#d0d0d0" stroke-width="1.7"/></svg>
<svg style="left:1803px;top:978px;" width="19" height="19" viewBox="0 0 19 19"><path d="M1 3.5 H17 M1 9 H17 M1 14.5 H17" stroke="#d0d0d0" stroke-width="1.6"/><rect x="11" y="1" width="2.4" height="5" fill="#d0d0d0"/><rect x="4" y="6.5" width="2.4" height="5" fill="#d0d0d0"/><rect x="8" y="12" width="2.4" height="5" fill="#d0d0d0"/></svg>
<svg style="left:1896px;top:978px;" width="16" height="18" viewBox="0 0 16 18"><rect x="0.5" y="3" width="14.5" height="2" fill="#d0d0d0"/><rect x="5" y="1" width="5.5" height="2" fill="#d0d0d0"/><path d="M2 6 H13.5 V15 C13.5 16.2 12.7 17 11.5 17 H4 C2.8 17 2 16.2 2 15 Z" fill="#d0d0d0"/></svg>
<div class="a" style="left:0px;top:1003px;width:1920px;height:27px;background:#474747;"></div>
<svg style="left:7px;top:1009px;" width="15" height="15" viewBox="0 0 15 15"><rect x="0.5" y="0.5" width="14" height="14" fill="none" stroke="#d0d0d0" stroke-width="1"/><circle cx="7.5" cy="7.5" r="4.3" fill="none" stroke="#d8d8d8" stroke-width="1.3" stroke-dasharray="1.2 2.18"/></svg>
<div class="t" style="left:37px;top:1013px;font-size:11px;line-height:11px;color:#dcdcdc;font-weight:400;">b) Basic-1</div>
<div class="t" style="left:469px;top:1013px;font-size:11px;line-height:11px;color:#dcdcdc;font-weight:400;">RGB/альфа-канал (8-бит/канал)  sRGB-elle-V2-srgbtrc.icc</div>
<div class="a" style="left:1339px;top:1007px;width:120px;height:22px;border:1px solid #333;background:#464646;box-shadow:inset 0 0 0 1px #4e4e4e"></div>
<div class="t" style="left:1344px;top:1013px;font-size:11px;line-height:11px;color:#dcdcdc;font-weight:400;">275 <span style="text-decoration:underline">x</span> 1 714 (2,1 МиБ)</div>
<div class="a" style="left:1572px;top:1008px;width:19px;height:19px;border-radius:50%;background:#2e2e2e"></div>
<svg style="left:1572px;top:1008px;" width="19" height="19" viewBox="0 0 19 19"><path d="M9.5 2 V17 M2 9.5 H9" stroke="#5a5a5a" stroke-width="1" stroke-dasharray="1 1.5"/><path d="M10 9.5 H17" stroke="#f0f0f0" stroke-width="1.2"/><circle cx="10" cy="9.5" r="1.1" fill="#f0f0f0"/><circle cx="17" cy="9.5" r="1.1" fill="#f0f0f0"/></svg>
<div class="t" style="left:1623px;top:1013px;font-size:11px;line-height:11px;color:#dcdcdc;font-weight:400;">0,00°</div>
<div class="t" style="left:1757px;top:1013px;font-size:11px;line-height:11px;color:#dcdcdc;font-weight:400;">6 400%</div>
<div class="a" style="left:1812px;top:1016px;width:78px;height:4px;border-radius:2px;background:#50708e"></div>
<div class="a" style="left:1885px;top:1016px;width:8px;height:4px;border-radius:2px;background:#333"></div>
<div class="a" style="left:1878px;top:1012px;width:11px;height:11px;border-radius:3px;border:1px solid #2a2a2a;background:#4a4a4a"></div>
<div class="a" style="left:1896px;top:1007px;width:22px;height:21px;border:1px solid #333;border-radius:3px;background:#3e3e3e"></div>
<div class="a" style="left:1901px;top:1010px;width:12px;height:14px;background:#fafafa"></div>
<svg style="left:1901px;top:1010px;" width="12" height="14" viewBox="0 0 12 14"><rect x="1" y="2" width="10" height="10" fill="#9cc3ee"/><circle cx="6" cy="7" r="3.6" fill="none" stroke="#f2d43a" stroke-width="1.4"/><circle cx="6" cy="7" r="2" fill="#3d7fd6"/></svg>
</body></html>
